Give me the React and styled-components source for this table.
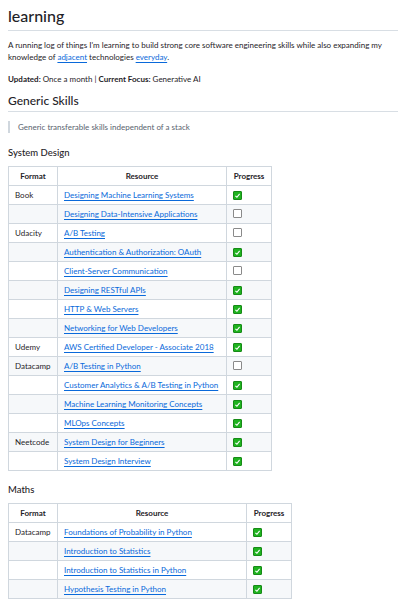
import React from 'react';
import styled, { createGlobalStyle } from 'styled-components';

const GlobalStyle = createGlobalStyle`
  html, body {
    margin: 0;
    padding: 0;
    background: #ffffff;
  }
  body {
    font-family: Lato, "Noto Sans", sans-serif;
    font-size: 8px;
    line-height: 1.5;
    color: #1f2328;
  }
`;

const systemDesign = [
  { format: 'Book', title: 'Designing Machine Learning Systems', done: true },
  { format: '', title: 'Designing Data-Intensive Applications', done: false },
  { format: 'Udacity', title: 'A/B Testing', done: false },
  { format: '', title: 'Authentication & Authorization: OAuth', done: true },
  { format: '', title: 'Client-Server Communication', done: false },
  { format: '', title: 'Designing RESTful APIs', done: true },
  { format: '', title: 'HTTP & Web Servers', done: true },
  { format: '', title: 'Networking for Web Developers', done: true },
  { format: 'Udemy', title: 'AWS Certified Developer - Associate 2018', done: true },
  { format: 'Datacamp', title: 'A/B Testing in Python', done: false },
  { format: '', title: 'Customer Analytics & A/B Testing in Python', done: true },
  { format: '', title: 'Machine Learning Monitoring Concepts', done: true },
  { format: '', title: 'MLOps Concepts', done: true },
  { format: 'Neetcode', title: 'System Design for Beginners', done: true },
  { format: '', title: 'System Design Interview', done: true },
];

const maths = [
  { format: 'Datacamp', title: 'Foundations of Probability in Python', done: true },
  { format: '', title: 'Introduction to Statistics', done: true },
  { format: '', title: 'Introduction to Statistics in Python', done: true },
  { format: '', title: 'Hypothesis Testing in Python', done: true },
];

const Check = ({ done }) =>
  done ? (
    <Box $done>
      <svg width="7" height="7" viewBox="0 0 10 10">
        <path d="M2 5.5 L4.2 7.5 L8 2.8" fill="none" stroke="#ffffff" strokeWidth="1.6" />
      </svg>
    </Box>
  ) : (
    <Box />
  );

const ResourceTable = ({ rows, widths }) => (
  <Table style={{ width: widths.reduce((a, b) => a + b, 0) }}>
    <colgroup>
      {widths.map((w, i) => (
        <col key={i} style={{ width: w }} />
      ))}
    </colgroup>
    <thead>
      <tr>
        <Th>Format</Th>
        <Th>Resource</Th>
        <Th>Progress</Th>
      </tr>
    </thead>
    <tbody>
      {rows.map((row, i) => (
        <Tr key={i} $striped={i % 2 === 1}>
          <Td>{row.format}</Td>
          <Td>
            <Link href="#">{row.title}</Link>
          </Td>
          <Td>
            <Check done={row.done} />
          </Td>
        </Tr>
      ))}
    </tbody>
  </Table>
);

const App = () => (
  <>
    <GlobalStyle />
    <Page>
      <H1>learning</H1>
      <P $gap={10}>
        A running log of things I'm learning to build strong core software engineering skills while also expanding my
        knowledge of <Link href="#">adjacent</Link> technologies <Link href="#">everyday</Link>.
      </P>
      <P>
        <strong>Updated:</strong> Once a month | <strong>Current Focus:</strong> Generative AI
      </P>
      <H2>Generic Skills</H2>
      <Quote>Generic transferable skills independent of a stack</Quote>
      <H3 $top={14}>System Design</H3>
      <ResourceTable rows={systemDesign} widths={[49, 169, 45]} />
      <H3 $top={13}>Maths</H3>
      <ResourceTable rows={maths} widths={[49, 189, 45]} />
    </Page>
  </>
);

const Page = styled.div`
  padding: 6px 8px 0 8px;
`;

const H1 = styled.h1`
  margin: 0 0 8px 0;
  padding-bottom: 4px;
  font-size: 16px;
  font-weight: 500;
  line-height: 1.25;
  border-bottom: 1px solid #d8dee4;
`;

const H2 = styled.h2`
  margin: 8px 0 9px 0;
  padding-bottom: 3px;
  font-size: 12px;
  font-weight: 500;
  line-height: 1.25;
  border-bottom: 1px solid #d8dee4;
`;

const H3 = styled.h3`
  margin: ${(p) => p.$top}px 0 7px 0;
  font-size: 9.5px;
  font-weight: 500;
  line-height: 1.25;
`;

const P = styled.p`
  margin: 0 0 ${(p) => p.$gap || 8}px 0;
`;

const Link = styled.a`
  color: #0969da;
  text-decoration: underline;
  text-underline-offset: 1.5px;
`;

const Quote = styled.blockquote`
  margin: 0 0 8px 0;
  padding: 0 8px;
  color: #59636e;
  border-left: 2px solid #d0d7de;
`;

const Table = styled.table`
  border-collapse: collapse;
  border-spacing: 0;
  table-layout: fixed;
  margin-bottom: 8px;
`;

const Th = styled.th`
  padding: 3px 6px;
  border: 1px solid #d0d7de;
  font-weight: 700;
  text-align: center;
`;

const Tr = styled.tr`
  background: ${(p) => (p.$striped ? '#f6f8fa' : '#ffffff')};
`;

const Td = styled.td`
  padding: 3px 6px;
  border: 1px solid #d0d7de;
  white-space: nowrap;
`;

const Box = styled.span`
  display: inline-flex;
  align-items: center;
  justify-content: center;
  width: 9px;
  height: 9px;
  box-sizing: border-box;
  vertical-align: -1px;
  border-radius: 1px;
  background: ${(p) => (p.$done ? '#1fb31f' : '#ffffff')};
  border: 1px solid ${(p) => (p.$done ? '#178a17' : '#8a8a8a')};
`;

export default App;
